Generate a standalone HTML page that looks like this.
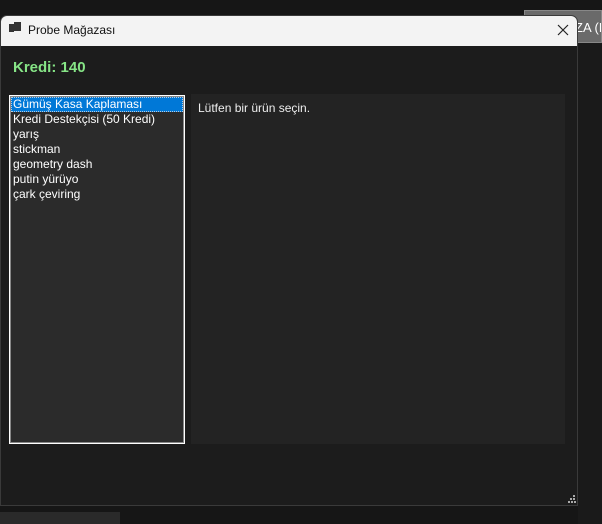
<!DOCTYPE html>
<html><head><meta charset="utf-8"><style>
*{margin:0;padding:0;box-sizing:border-box}
body{width:602px;height:524px;background:#161616;overflow:hidden;position:relative;font-family:"Segoe UI","Liberation Sans","DejaVu Sans",sans-serif;font-size:12px}
.abs{position:absolute}
</style></head><body>
<div class="abs" style="left:524px;top:10px;width:78px;height:33px;background:#6a6a6a;border:1px solid #888;color:#fff;font-size:13px;padding:9px 0 0 50px;white-space:nowrap;overflow:hidden">ZA (M</div>
<div class="abs" style="left:578px;top:43px;width:24px;height:481px;background:#1a1a1a"></div>
<div class="abs" style="left:0;top:512px;width:120px;height:12px;background:#2a2a2a"></div>
<div class="abs" style="left:0;top:15px;width:578px;height:491px;background:#1c1c1c;border:1px solid #3a3a3a;border-radius:7px 7px 0 0;overflow:hidden">
 <div class="abs" style="left:-1px;top:-1px;width:580px;height:31px;background:#f3f3f3"></div>
 <div class="abs" style="left:8px;top:8px;width:5px;height:5px;background:#333"></div>
 <div class="abs" style="left:13px;top:6px;width:7px;height:9px;background:#333"></div>
 <div class="abs" style="left:8px;top:13px;width:5px;height:3px;background:#333"></div>
 <div class="abs" style="left:27px;top:7px;color:#111;font-size:12px">Probe Mağazası</div>
 <svg class="abs" style="left:556px;top:8px" width="12" height="12"><path d="M1 1L11 11M11 1L1 11" stroke="#222" stroke-width="1.2"/></svg>
 <div class="abs" style="left:12px;top:43px;color:#86e486;font-weight:bold;font-size:15px">Kredi: 140</div>
 <div class="abs" style="left:8px;top:79px;width:176px;height:349px;background:#2b2b2b;border:1px solid #fff;box-shadow:inset 0 0 0 1px #888"></div>
 <div class="abs" style="left:10px;top:81px;width:172px;height:15px;background:#0078d7;border:1px dotted #bcd"></div>
 <div class="abs" style="left:12px;top:81px;color:#fff;line-height:15px">Gümüş Kasa Kaplaması<br>Kredi Destekçisi (50 Kredi)<br>yarış<br>stickman<br>geometry dash<br>putin yürüyo<br>çark çeviring</div>
 <div class="abs" style="left:190px;top:78px;width:374px;height:350px;background:#232323"></div>
 <div class="abs" style="left:197px;top:85px;color:#eee">Lütfen bir ürün seçin.</div>
 <svg class="abs" style="left:567px;top:479px" width="8" height="8"><g fill="#aaa"><rect x="5" y="0" width="2" height="2"/><rect x="2" y="3" width="2" height="2"/><rect x="5" y="3" width="2" height="2"/><rect x="0" y="6" width="2" height="2"/><rect x="3" y="6" width="2" height="2"/><rect x="6" y="6" width="2" height="2"/></g></svg>
</div>
</body></html>
